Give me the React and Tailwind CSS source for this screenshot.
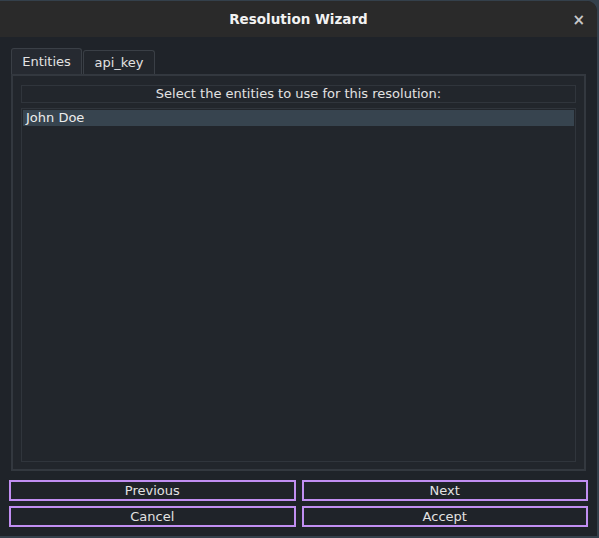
export default function App() {
  const font = { fontFamily: '"DejaVu Sans", "Liberation Sans", sans-serif' }
  return (
    <div className="w-[599px] h-[538px] bg-[#34404b] pt-[1px] overflow-hidden" style={font}>
      <div className="w-[597px] h-[535px] flex flex-col rounded-tr-[10px] overflow-hidden bg-[#1f2329]">
        <div className="h-[36px] shrink-0 bg-[#2a2a2a] relative flex items-center justify-center">
          <span className="text-[13.5px] font-bold text-[#f2f2f2]">Resolution Wizard</span>
          <span className="absolute right-[12px] top-[8px] text-[15px] font-bold text-[#c8c8c8]">×</span>
        </div>
        <div className="flex-1 flex flex-col px-[9px] pt-[11px]">
          <div className="flex flex-col mx-[2px]">
            <div className="flex items-end h-[26px]">
              <div className="w-[71px] h-[26px] bg-[#262a31] border border-[#3a3f46] border-b-0 rounded-t-[3px] text-[13px] text-[#e2e2e2] flex items-center justify-center">
                Entities
              </div>
              <div className="ml-[1px] w-[72px] h-[24px] bg-[#22262c] border border-[#3a3f46] border-b-0 rounded-t-[3px] text-[13px] text-[#e2e2e2] flex items-center justify-center">
                api_key
              </div>
            </div>
            <div className="h-[397px] border-2 border-[#33383f] bg-[#22262c] px-[8px] pt-[9px] pb-[7px] flex flex-col gap-[5px]">
              <div className="h-[18px] border border-[#30353c] text-[13px] text-[#e2e2e2] flex items-center justify-center">
                Select the entities to use for this resolution:
              </div>
              <div className="flex-1 border border-[#30353c] p-[1px]">
                <div className="h-[16px] bg-[#37444f] text-[13px] text-[#ececec] leading-[16px] pl-[3px]">John Doe</div>
              </div>
            </div>
          </div>
          <div className="grid grid-cols-2 gap-x-[6px] gap-y-[5px] mt-[9px]">
            {['Previous', 'Next', 'Cancel', 'Accept'].map((label) => (
              <button
                key={label}
                className="h-[21px] border-2 border-[#c18ef2] bg-[#1f2329] text-[13px] text-[#e2e2e2] flex items-center justify-center leading-none"
              >
                {label}
              </button>
            ))}
          </div>
        </div>
      </div>
    </div>
  )
}
